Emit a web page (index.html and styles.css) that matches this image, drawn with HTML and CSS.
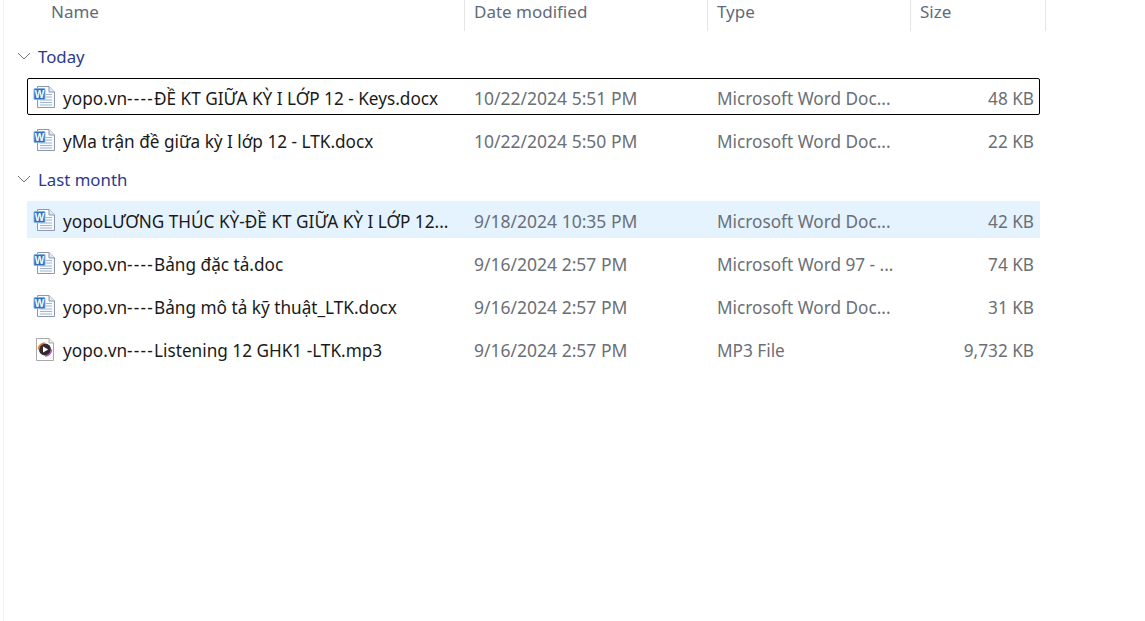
FILE: index.html
```html
<!DOCTYPE html>
<html lang="en">
<head>
  <meta charset="UTF-8">
  <title>Downloads</title>
  <link rel="stylesheet" href="styles.css">
</head>
<body>
  <svg class="defs" width="0" height="0">
    <symbol id="wordPage" viewBox="0 0 24 24">
      <path d="M4.5 1.5H16L21.5 7V22.5H4.5Z" fill="#f7fafe" stroke="#8d99ab"/>
      <path d="M16 1.5V7H21.5" fill="#dfe8f4" stroke="#8d99ab"/>
      <path d="M13 9.5H19M13 12H19M7 15H19M7 17.5H19M7 20H19" stroke="#a3b6d0"/>
      <rect x="1" y="3.5" width="11" height="11" rx="1" fill="#2f6fc4" stroke="#86aee0"/>
    </symbol>
    <symbol id="mediaIcon" viewBox="0 0 24 24">
      <path d="M3.5 1.5H16L20.5 6V23.5H3.5Z" fill="#fff" stroke="#a8a8a8"/>
      <path d="M16 1.5V6H20.5" fill="#eee" stroke="#a8a8a8"/>
      <circle cx="12" cy="12.5" r="6" fill="#33292e"/>
      <path d="M5.5 12.5A6.5 6.5 0 0 1 12 6" fill="none" stroke="#e07f3c" stroke-width="1.6"/>
      <path d="M18.5 12.5A6.5 6.5 0 0 1 12 19" fill="none" stroke="#b455b8" stroke-width="1.6"/>
      <path d="M10 9.5L15.2 12.5L10 15.5Z" fill="#fff"/>
    </symbol>
  </svg>

  <div class="explorer">
    <div class="col-header">
      <div class="col col-name">Name</div>
      <div class="col col-date">Date modified</div>
      <div class="col col-type">Type</div>
      <div class="col col-size">Size</div>
    </div>

    <div class="group group-first">
      <svg class="chevron" viewBox="0 0 14 8"><path d="M1 1L7 7L13 1" fill="none" stroke="#6f7680"/></svg>
      <span>Today</span>
    </div>
    <div class="row focused">
      <svg class="icon" viewBox="0 0 24 24"><use href="#wordPage"/><text class="word-letter" x="6.5" y="12.5">W</text></svg>
      <span class="cell name">yopo.vn<span class="dash">----</span>ĐỀ KT GIỮA KỲ I LỚP 12 - Keys.docx</span>
      <span class="cell">10/22/2024 5:51 PM</span>
      <span class="cell type">Microsoft Word Doc...</span>
      <span class="cell size">48 KB</span>
    </div>
    <div class="row">
      <svg class="icon" viewBox="0 0 24 24"><use href="#wordPage"/><text class="word-letter" x="6.5" y="12.5">W</text></svg>
      <span class="cell name">yMa trận đề giữa kỳ I lớp 12 - LTK.docx</span>
      <span class="cell">10/22/2024 5:50 PM</span>
      <span class="cell type">Microsoft Word Doc...</span>
      <span class="cell size">22 KB</span>
    </div>

    <div class="group">
      <svg class="chevron" viewBox="0 0 14 8"><path d="M1 1L7 7L13 1" fill="none" stroke="#6f7680"/></svg>
      <span>Last month</span>
    </div>
    <div class="row hovered">
      <svg class="icon" viewBox="0 0 24 24"><use href="#wordPage"/><text class="word-letter" x="6.5" y="12.5">W</text></svg>
      <span class="cell name">yopoLƯƠNG THÚC KỲ-ĐỀ KT GIỮA KỲ I LỚP 12...</span>
      <span class="cell">9/18/2024 10:35 PM</span>
      <span class="cell type">Microsoft Word Doc...</span>
      <span class="cell size">42 KB</span>
    </div>
    <div class="row">
      <svg class="icon" viewBox="0 0 24 24"><use href="#wordPage"/><text class="word-letter" x="6.5" y="12.5">W</text></svg>
      <span class="cell name">yopo.vn<span class="dash">----</span>Bảng đặc tả.doc</span>
      <span class="cell">9/16/2024 2:57 PM</span>
      <span class="cell type">Microsoft Word 97 - ...</span>
      <span class="cell size">74 KB</span>
    </div>
    <div class="row">
      <svg class="icon" viewBox="0 0 24 24"><use href="#wordPage"/><text class="word-letter" x="6.5" y="12.5">W</text></svg>
      <span class="cell name">yopo.vn<span class="dash">----</span>Bảng mô tả kỹ thuật_LTK.docx</span>
      <span class="cell">9/16/2024 2:57 PM</span>
      <span class="cell type">Microsoft Word Doc...</span>
      <span class="cell size">31 KB</span>
    </div>
    <div class="row">
      <svg class="icon"><use href="#mediaIcon"/></svg>
      <span class="cell name">yopo.vn<span class="dash">----</span>Listening 12 GHK1 -LTK.mp3</span>
      <span class="cell">9/16/2024 2:57 PM</span>
      <span class="cell type">MP3 File</span>
      <span class="cell size">9,732 KB</span>
    </div>
  </div>
</body>
</html>
```

FILE: styles.css
```css
html, body {
  height: 100%;
}

body {
  margin: 0;
  background-color: #fff;
  font-family: "Noto Sans", "Open Sans", Arial, sans-serif;
  font-size: 17.5px;
  overflow: hidden;
}

.defs {
  display: block;
  height: 0;
}

.word-letter {
  font-family: "Liberation Sans", Arial, sans-serif;
  font-size: 10px;
  font-weight: bold;
  fill: #fff;
  text-anchor: middle;
}

.explorer {
  margin-left: 3px;
  height: 100%;
  border-left: 1px solid #f0f0f0;
}

.col-header {
  display: grid;
  grid-template-columns: 461px 243px 203px 135px;
  height: 31px;
  font-size: 17px;
}

.col {
  box-sizing: border-box;
  border-right: 1px solid #e5e5e5;
  padding-left: 9px;
  line-height: 24px;
  color: #5f6b7a;
}

.col-name {
  padding-left: 47px;
}

.group {
  box-sizing: border-box;
  display: flex;
  align-items: center;
  height: 37px;
  padding: 0 0 7px 13px;
  font-size: 16.8px;
  color: #2b3a8c;
}

.group-first {
  margin-top: 10px;
}

.chevron {
  width: 14px;
  height: 8px;
  margin-right: 7px;
}

.row {
  box-sizing: border-box;
  display: grid;
  grid-template-columns: 30px 411px 243px 203px 1fr;
  align-items: center;
  width: 1013px;
  height: 37px;
  margin-left: 23px;
  margin-bottom: 6px;
  padding: 0 6px;
  color: #6b6f76;
  white-space: nowrap;
}

.row.focused {
  outline: 1px solid #000;
  outline-offset: -1px;
  border-radius: 2px;
}

.row.hovered {
  background-color: #e5f3ff;
}

.icon {
  width: 24px;
  height: 24px;
}

.cell {
  padding-top: 2px;
}

.name {
  padding-top: 4px;
  font-size: 17.2px;
  color: #1a1a1a;
}

.dash {
  letter-spacing: 1.2px;
}

.type {
  padding-top: 4px;
  font-size: 17.2px;
}

.size {
  padding-top: 4px;
  font-size: 17.2px;
  text-align: right;
}
```
